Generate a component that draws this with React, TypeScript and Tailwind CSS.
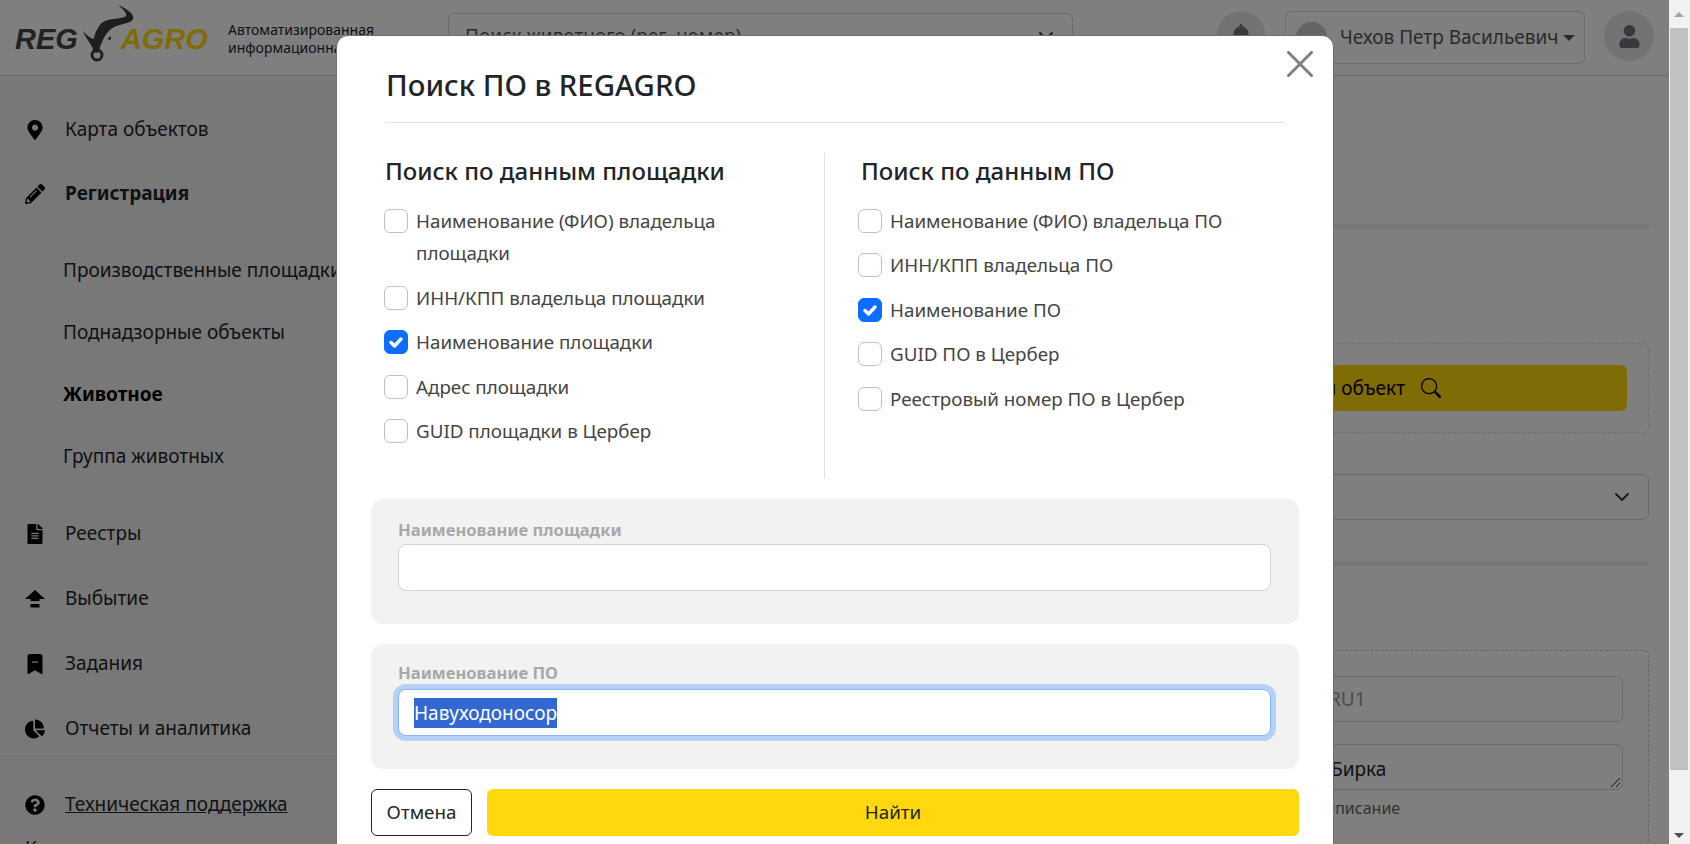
import { FaBell, FaChartPie, FaFileAlt, FaMapMarkerAlt, FaPencilAlt, FaQuestionCircle, FaUser } from "react-icons/fa";
import { BsBookmarkDashFill, BsSearch } from "react-icons/bs";

const font = "font-['Noto_Sans',sans-serif]";

function Logo() {
  return (
    <div className="flex h-[75px] w-[228px] shrink-0 items-center pl-[15px] pt-[3px]">
      <span className="font-['Liberation_Sans',sans-serif] text-[29px] font-bold italic leading-none text-[#444]">REG</span>
      <svg className="ml-[5px] mr-[-14px] h-[58px] w-[52px] shrink-0 -translate-y-[5px]" viewBox="0 0 52 58">
        <path d="M35 0C45 4 52 10 50 14C47 20 33 18 26 26C20 32 18 40 15 48L10 47C9 38 11 28 17 20C23 12 38 15 43 11C44 8 40 4 35 0Z" fill="#3c3c3c" />
        <path d="M0 26C3 30 7 33 11 34L13 46L9 42C6 36 2 32 0 26Z" fill="#3c3c3c" />
        <path d="M24 34l4-3l0 4z" fill="#3c3c3c" />
        <circle cx="14" cy="50" r="5" fill="none" stroke="#3c3c3c" strokeWidth="3" />
      </svg>
      <span className="font-['Liberation_Sans',sans-serif] text-[29px] font-bold italic leading-none text-[#ffd80d]">AGRO</span>
    </div>
  );
}

function Header() {
  return (
    <header className="flex h-[76px] shrink-0 items-start border-b border-[#d4d4d4] bg-white">
      <Logo />
      <div className="w-[220px] shrink-0 pt-[21px] text-[14px] leading-[18px] text-[#212529]">
        Автоматизированная
        <br />
        информационная
      </div>
      <div className="mt-[13px] flex h-[46px] w-[625px] shrink-0 items-center justify-between rounded-md border border-[#ced4da] pl-[16px] pr-[18px] text-[19px] text-[#555]">
        <span className="pt-[1px]">Поиск животного (рег. номер)</span>
        <svg className="h-4 w-4" viewBox="0 0 16 16" fill="none" stroke="#343a40" strokeWidth="2" strokeLinecap="round" strokeLinejoin="round">
          <path d="M2 5l6 6 6-6" />
        </svg>
      </div>
      <div className="ml-[144px] mt-[11px] flex h-[50px] w-[48px] items-center justify-center rounded-full bg-[#e6e6e6] text-[#6c757d]">
        <FaBell className="h-[24px] w-[24px]" />
      </div>
      <div className="ml-[20px] mt-[11px] flex h-[53px] w-[300px] items-center rounded-md border border-[#d8d8d8] pl-[10px]">
        <div className="h-[31px] w-[31px] rounded-full bg-[#c8c8c8]" />
        <span className="ml-[13px] whitespace-nowrap text-[19px] text-[#555]">Чехов Петр Васильевич</span>
        <span className="ml-[5px] h-0 w-0 border-x-[6px] border-t-[6px] border-x-transparent border-t-[#555]" />
      </div>
      <div className="ml-[19px] mt-[11px] flex h-[50px] w-[50px] items-center justify-center rounded-full bg-[#e6e6e6] text-[#6c757d]">
        <FaUser className="h-[23px] w-[23px]" />
      </div>
    </header>
  );
}

const navIcon = "h-[20px] w-[20px] shrink-0 text-black";

function NavItem({ icon, label, bold, underline }: { icon: React.ReactNode; label: string; bold?: boolean; underline?: boolean }) {
  return (
    <div className="flex h-[65px] shrink-0 items-center pl-[25px]">
      <span className="flex w-[40px] shrink-0 items-center">{icon}</span>
      <span className={`${bold ? "font-bold" : ""} ${underline ? "underline" : ""}`}>{label}</span>
    </div>
  );
}

function SubItem({ label, bold }: { label: string; bold?: boolean }) {
  return (
    <div className={`flex h-[62px] shrink-0 items-center pl-[63px] ${bold ? "font-bold text-black" : ""}`}>{label}</div>
  );
}

function Sidebar() {
  return (
    <aside className="flex w-[340px] shrink-0 flex-col overflow-hidden whitespace-nowrap bg-[#f0f0f0] pt-[21px] text-[19px] text-[#212529]">
      <NavItem icon={<FaMapMarkerAlt className={navIcon} />} label="Карта объектов" />
      <div className="-mt-[1px] shrink-0 pb-[13px]">
        <NavItem icon={<FaPencilAlt className={navIcon} />} label="Регистрация" bold />
      </div>
      <SubItem label="Производственные площадки" />
      <SubItem label="Поднадзорные объекты" />
      <SubItem label="Животное" bold />
      <SubItem label="Группа животных" />
      <div className="h-[14px] shrink-0" />
      <NavItem icon={<FaFileAlt className={navIcon} />} label="Реестры" />
      <NavItem
        icon={
          <svg className={navIcon} viewBox="0 0 20 20" fill="currentColor">
            <path d="M10 1l10 9h-5.500v2h-9v-2H0z" />
            <rect x="5.500" y="15" width="9" height="3.500" />
          </svg>
        }
        label="Выбытие"
      />
      <NavItem icon={<BsBookmarkDashFill className={navIcon} />} label="Задания" />
      <NavItem icon={<FaChartPie className={navIcon} />} label="Отчеты и аналитика" />
      <div className="-mt-[2px] shrink-0 border-t border-[#e2e2e2] pt-[12px]">
        <NavItem icon={<FaQuestionCircle className={navIcon} />} label="Техническая поддержка" underline />
        <div className="-mt-[3px] pl-[25px]">Контакты</div>
      </div>
    </aside>
  );
}

function Main() {
  return (
    <main className="min-w-0 flex-1 overflow-hidden pr-[20px] pt-[148px] text-[19px] text-[#212529]">
      <div className="h-[5px] bg-[#eeeeee]" />
      <div className="mt-[114px] h-[90px] rounded-md border border-dashed border-[#dcdcdc] p-[21px] pr-[21px]">
        <div className="flex h-[46px] items-center justify-end gap-[16px] rounded-md bg-[#ffd80d] pr-[186px] text-black">
          Найти объект
          <BsSearch className="h-[20px] w-[20px]" />
        </div>
      </div>
      <div className="mt-[41px] flex h-[46px] items-center justify-end rounded-md border border-[#d4d4d4] pr-[18px]">
        <svg className="h-4 w-4" viewBox="0 0 16 16" fill="none" stroke="#343a40" strokeWidth="2" strokeLinecap="round" strokeLinejoin="round">
          <path d="M2 5l6 6 6-6" />
        </svg>
      </div>
      <div className="mt-[41px] h-[5px] bg-[#eeeeee]" />
      <div className="mt-[84px] rounded-md border border-dashed border-[#c8c8c8] p-[25px]">
        <div className="flex h-[46px] items-center rounded-md border border-[#d4d4d4] pl-[962px] text-[#999]">RU1</div>
        <div className="relative mt-[22px] flex h-[46px] items-center rounded-md border border-[#d4d4d4] pl-[964px] pt-[4px]">
          Бирка
          <svg className="absolute bottom-[1px] right-[1px] h-[12px] w-[12px]" viewBox="0 0 12 12" stroke="#222" strokeWidth="1">
            <path d="M2 11L11 2M7 11l4-4" />
          </svg>
        </div>
        <div className="mt-[6px] pl-[957px] text-[16px] text-[#666]">Описание</div>
      </div>
    </main>
  );
}

function CheckRow({ label, checked }: { label: string; checked?: boolean }) {
  return (
    <label className="mb-[12px] flex items-start">
      <span
        className={`mr-[8px] mt-[4px] flex h-[24px] w-[24px] shrink-0 items-center justify-center rounded-[6px] border ${
          checked ? "border-[#0d6efd] bg-[#0d6efd]" : "border-[#bfbfbf] bg-white"
        }`}
      >
        {checked && (
          <svg className="h-[20px] w-[20px]" viewBox="0 0 20 20" fill="none" stroke="#fff" strokeWidth="3.400" strokeLinecap="round" strokeLinejoin="round">
            <path d="M5 10.500l3.500 3.500L15 7" />
          </svg>
        )}
      </span>
      <span>{label}</span>
    </label>
  );
}

function SearchColumn({ title, rows, className, titleClass }: { title: string; rows: { label: string; checked?: boolean }[]; className: string; titleClass: string }) {
  return (
    <div className={className}>
      <h4 className={`mb-[20px] text-[24px] font-medium leading-[29px] text-[#212529] ${titleClass}`}>{title}</h4>
      {rows.map((r) => (
        <CheckRow key={r.label} label={r.label} checked={r.checked} />
      ))}
    </div>
  );
}

function Modal() {
  return (
    <div className="absolute left-[336px] top-[35px] w-[998px] rounded-[12px] border border-[#6e6e6e] bg-white pb-[40px] pl-[34px] pr-[34px] text-[18.8px] leading-[32.4px] text-[#444]">
      <div className="mx-[15px] flex h-[87px] items-center border-b border-[#dee2e6] pt-[12px]">
        <h3 className="text-[29.300px] font-medium text-[#212529]">Поиск ПО в REGAGRO</h3>
      </div>
      <svg className="absolute right-[20px] top-[15px] h-[26px] w-[26px]" viewBox="0 0 26 26" stroke="#808080" strokeWidth="3" strokeLinecap="round">
        <path d="M1.500 1.500l23 23M24.500 1.500l-23 23" />
      </svg>
      <div className="mt-[30px] flex">
        <SearchColumn
          className="h-[325px] w-[454px] shrink-0 border-r border-[#dee2e6] pl-[13px] pr-[40px] pt-[3px]"
          titleClass="ml-[1px]"
          title="Поиск по данным площадки"
          rows={[
            { label: "Наименование (ФИО) владельца площадки" },
            { label: "ИНН/КПП владельца площадки" },
            { label: "Наименование площадки", checked: true },
            { label: "Адрес площадки" },
            { label: "GUID площадки в Цербер" },
          ]}
        />
        <SearchColumn
          className="flex-1 pl-[33px] pt-[3px]"
          titleClass="ml-[3px]"
          title="Поиск по данным ПО"
          rows={[
            { label: "Наименование (ФИО) владельца ПО" },
            { label: "ИНН/КПП владельца ПО" },
            { label: "Наименование ПО", checked: true },
            { label: "GUID ПО в Цербер" },
            { label: "Реестровый номер ПО в Цербер" },
          ]}
        />
      </div>
      <div className="mt-[21px] h-[125px] rounded-[12px] bg-[#f2f2f2] pl-[27px] pr-[28px] pt-[18px]">
        <div className="mb-[1px] text-[16.600px] font-bold leading-[26px] text-[#a8a8a8]">Наименование площадки</div>
        <input className="block h-[47px] w-full rounded-[8px] border border-[#ced4da] bg-white px-[15px] outline-none" />
      </div>
      <div className="mt-[20px] h-[125px] rounded-[12px] bg-[#f2f2f2] pl-[27px] pr-[28px] pt-[16px]">
        <div className="text-[16.600px] font-bold leading-[26px] text-[#a8a8a8]">Наименование ПО</div>
        <div className="mt-[3px] flex h-[47px] items-center rounded-[8px] border border-[#86b7fe] bg-white px-[15px] shadow-[0_0_0_5px_#b6d0f8]">
          <span className="bg-[#3367d1] text-[19px] leading-[30px] text-white">Навуходоносор</span>
        </div>
      </div>
      <div className="mt-[20px] flex gap-[15px]">
        <button className="h-[47px] w-[101px] rounded-[6px] border border-[#212529] text-[#212529]">Отмена</button>
        <button className="h-[47px] flex-1 rounded-[6px] bg-[#ffd80d] text-[#212529]">Найти</button>
      </div>
    </div>
  );
}

function Scrollbar() {
  return (
    <div className="flex w-[21px] shrink-0 flex-col items-center bg-[#f1f1f1] pl-[1px] pr-[2px]">
      <div className="flex h-[28px] w-full items-center justify-center">
        <span className="h-0 w-0 border-x-[5px] border-b-[5px] border-x-transparent border-b-[#a3a3a3]" />
      </div>
      <div className="h-[742px] w-full bg-[#c1c1c1]" />
      <div className="flex flex-1 items-end justify-center pb-[6px]">
        <span className="h-0 w-0 border-x-[5px] border-t-[5px] border-x-transparent border-t-[#505050]" />
      </div>
    </div>
  );
}

export default function App() {
  return (
    <div className={`flex h-screen overflow-hidden ${font}`}>
      <div className="relative flex min-w-0 flex-1 flex-col overflow-hidden bg-white">
        <Header />
        <div className="flex min-h-0 flex-1">
          <Sidebar />
          <Main />
        </div>
        <div className="absolute inset-0 bg-black/50" />
        <Modal />
      </div>
      <Scrollbar />
    </div>
  );
}
